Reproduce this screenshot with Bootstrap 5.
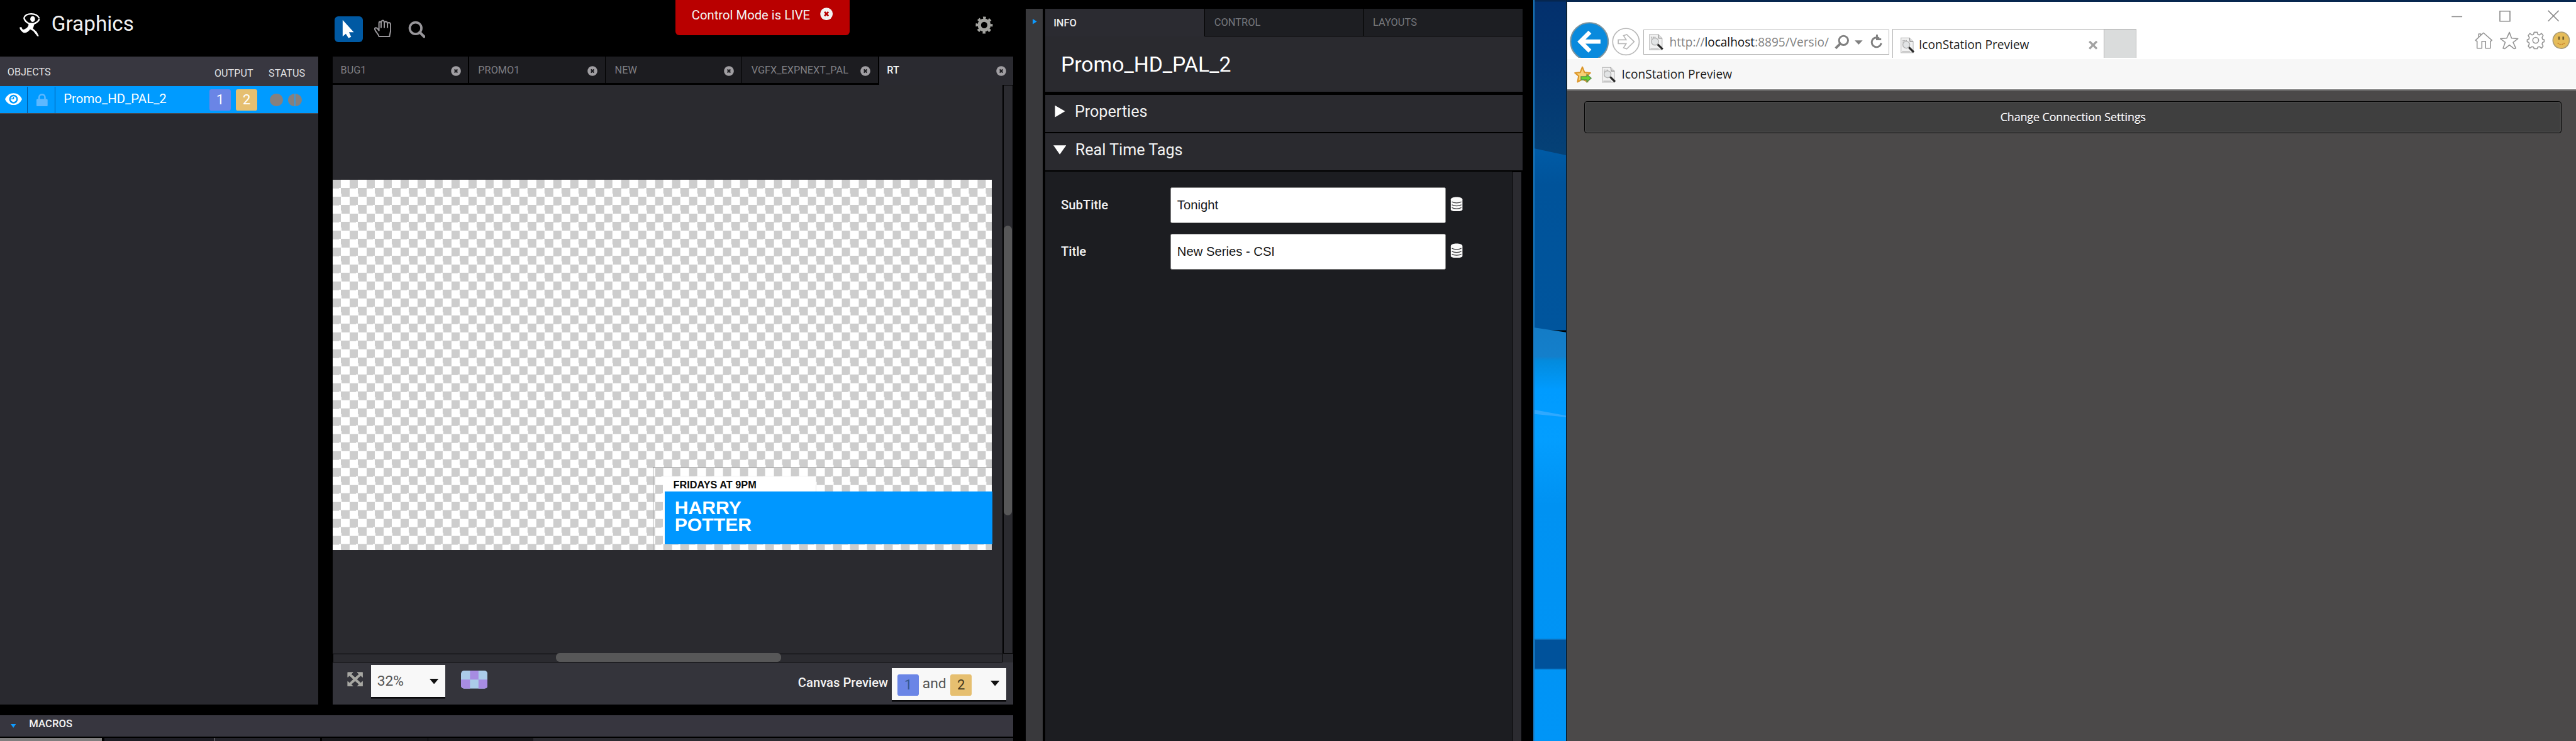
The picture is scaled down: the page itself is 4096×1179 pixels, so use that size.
<!DOCTYPE html>
<html lang="en">
<head>
<meta charset="utf-8">
<title>Graphics</title>
<link rel="stylesheet" href="https://cdn.jsdelivr.net/npm/bootstrap@5.3.0/dist/css/bootstrap.min.css">
<style>
html,body{height:100%;overflow:hidden;background:#000}
.stage{zoom:.8435;width:4856px;height:1398px;font-family:Roboto,"Liberation Sans",sans-serif;line-height:1;color:#f2f2f2;overflow:hidden}
svg{display:block;flex:none}
.no-shrink>*{flex:none}
/* graphics editor */
.editor{width:1934px}
.topbar{height:107px}
.logo{margin:25px 0 0 36px}
.brandname{font-size:39.5px;margin:25px 0 0 19px;width:534px}
.tool-on{width:53px;height:48px;margin-top:31px;background:#0059a3;border-radius:7px}
.hand{margin:37px 0 0 21px}
.lens{margin:39px 0 0 31px}
.live{width:329px;height:66px;margin-left:471px;background:#b90000;border-radius:0 0 7px 7px;padding:0 32px 9px 31px;font-size:24px;white-space:nowrap}
.gear{margin:31px 0 0 237px}
.objects{width:600px;background:#29292f;height:1222px}
.obj-head{height:56px;background:#383740;font-size:19.2px;padding:3px 25px 0 14px;color:#e2e2e4}
.obj-row{height:52px;background:#009bff;border-bottom:2px solid #4a4a50;color:#fff;font-size:24.2px}
.cell{width:52px;height:50px;border-right:2px solid #03579f}
.objname{width:291px;padding:0 0 3px 16px}
.chip{width:40px;height:40px;border-radius:4px;font-size:26px}
.c1{background:#6a85e6}
.c2{background:#e6bf70}
.dot{width:24px;height:24px;border-radius:50%;background:#85807f}
.work{width:1283px;margin-left:27px;height:1222px;background:#2a2a2f}
.tabs{height:53px;background:#000;font-size:19.3px;color:#7f7f84}
.tabx{width:255.5px;height:50px;margin-right:2px;background:#1c1c20;padding:3px 14px 0 17px}
.tabx.on{background:#2a2a30;color:#f4f4f4;height:53px;width:253px;margin:0;padding:0 13px 0 15px;font-weight:500}
.scene{width:1263px;height:1073px;padding-top:179px}
.checker{width:1243px;height:698px;background:repeating-conic-gradient(#fff 0 25%,#cdcdcd 0 50%) 0 0/32px 32px;padding:542px 0 0 604px}
.bounds{width:639px;height:156px;border:2px solid #a4a4a4;border-width:2px 0 0 2px;padding:17px 0 0 17px;font-family:"Liberation Sans",sans-serif;font-weight:700}
.sub{width:289px;height:28px;background:#fff;color:#0c0c0c;font-size:19.3px;padding:6px 0 0 20px;white-space:nowrap}
.main-t{width:622px;height:100px;background:#0097ff;border-left:4px solid #fff;font-size:35.8px;line-height:32.5px;padding:14px 0 0 19px;color:#fff}
.vbar{width:20px;height:1073px;border:2px solid #000;border-width:2px 2px 2px 3px;background:#2b2b30;padding-top:264px}
.vthumb{width:15px;height:547px;border-radius:8px;background:#575758}
.hbar{width:1263px;height:16px;border:2px solid #000;background:#2b2b30}
.hthumb{height:16px;width:424px;margin:-2px 0 0 420px;border-radius:7px;background:#575758}
.bottombar{height:80px;background:#34343b;padding:0 13px 0 27px}
.pick{height:61px;background:#f8f8f8;color:#555;box-shadow:0 3px 0 #08080a;font-size:27px}
.pick1{width:139px;margin:5px 0 0 16px;padding:2px 12px 0 11px}
.pick2{width:216px;margin:11px 0 0 7px;padding:4px 13px 0 11px}
.macros{height:40px;margin-top:20px;width:1910px;background:#37363f;font-size:19.8px;font-weight:500;padding:0 0 6px 20px}
.slots{margin-top:3px;height:6px;width:1910px}
/* inspector */
.sidebar-strip{width:32px;margin-top:17px;background:#39393c;padding:19px 0 0 13px}
.inspector{width:900px;margin:17px 0 0 4px}
.itabs{height:52px;font-size:19.5px;color:#77787c}
.itab{height:50px;background:#1d1e22;padding:3px 0 0 17px;margin-right:2px}
.itab.on{height:52px;width:300px;background:#2b2b31;color:#ececec;font-weight:500;padding:2px 0 0 16px}
.title-box{height:104px;background:#2a2a2f;font-size:40px;padding:1px 0 0 30px;color:#fff;margin-bottom:6px;white-space:nowrap}
.fold{height:70px;background:#2a2a2f;margin-bottom:2.5px;font-size:29.8px;padding:0 0 8px 16px}
.fold svg{margin-right:17px}
.form-area{background:#1c1d21;width:880px;height:1074px;padding:29px 0 0 30px}
.field{height:67.5px;margin-bottom:20.5px;font-size:24px;font-weight:500}
.field label{width:206px}
.field .inp{width:520px;height:67.5px;background:#fff;border:2px solid #8b8b8b;border-radius:3px;color:#161616;font:24px "Liberation Sans",sans-serif;padding:0 12px;margin-right:8px}
.itrack{width:18px;border:2px solid #000;border-width:2px 0 0 2px;background:#2b2b30}
/* desktop and browser */
.desk{width:65px;margin-left:20px;border:solid #1b7cc3;border-width:0 2px 0 3px;border-right-color:#256aa4}
.ie{width:1901px;font-family:"Open Sans","Noto Sans",sans-serif;color:#1c1c1c;background:#4b4949}
.chrome{height:111px;border-top:4px solid #06264f;background:#fff}
.addr{width:463px;height:48px;margin:52px 0 0 6px;border:2px solid #b3b3b3;padding:0 11px 0 8px;font-size:22.6px;color:#828282;white-space:nowrap}
.addr b{font-weight:400;color:#111}
.ietab{width:399px;height:54px;margin:51px 0 0 7px;border:2px solid #b3b3b3;border-bottom:0;padding:6px 11px 0 12px;font-size:22.7px;white-space:nowrap}
.newtab{width:60px;height:54px;margin-top:51px;background:#dadcdc;border:solid #b3b3b3;border-width:2px 2px 0 0}
.winctl{margin-left:auto;width:240px;padding-top:16px}
.fav{height:60px;background:#f7f7f7;border-bottom:3px solid #808080;box-shadow:inset 0 -2px #fff;font-size:22.7px;padding:2px 0 0 13px}
.connect{width:1842px;height:60px;margin:20px 0 0 32px;background:#3f3f3f;border:2px solid #050505;box-shadow:inset 0 0 0 2px #484848;border-radius:5px;color:#fff;font-size:21px;text-shadow:0 1px 0 #000,0 0 1px #fff}
</style>
<script src="https://cdn.jsdelivr.net/npm/bootstrap@5.3.0/dist/js/bootstrap.bundle.min.js"></script>
</head>
<body>
<svg width="0" height="0" class="position-absolute">
<symbol id="x" viewBox="0 0 20 20"><circle cx="10" cy="10" r="9.8" fill="currentColor"/><path d="M7 6.8l6 6.4M13 6.8l-6 6.4" stroke="var(--k,#1c1c20)" stroke-width="2.8"/></symbol>
<symbol id="db" viewBox="0 0 24 28"><path fill="#fafafa" d="M1 5c0-6 22-6 22 0v19c0 5-22 5-22 0z"/><path fill="none" stroke="#3a3a3c" stroke-width="1.500" d="M3 9.500c4 3 14 3 18 0M3 15c4 3 14 3 18 0M3 20.500c4 3 14 3 18 0"/></symbol>
<symbol id="page" viewBox="0 0 28 30"><path d="M2 1h16l7 7v21H2z" fill="#f1f1f1" stroke="#c2c2c2" stroke-width="1.5"/><path d="M18 1l1 7h6" fill="#ddd" stroke="#8a8a8a" stroke-width="1.3"/><path d="M5 6h9M5 9h7" stroke="#aaa" stroke-width="1.6" stroke-dasharray="2 1"/><circle cx="12" cy="14" r="6.5" fill="#e2e4e5" stroke="#b4b4b4" stroke-width="1.7"/><path d="M17 19l9 9" stroke="#292929" stroke-width="3.8"/><path d="M4 27h15" stroke="#c5c5c5" stroke-width="2"/></symbol>
</svg>
<div class="stage d-flex no-shrink">

<div class="editor d-flex flex-column no-shrink">
  <header class="topbar d-flex align-items-start no-shrink">
    <svg class="logo" width="42" height="44" viewBox="0 0 42 44" fill="none" stroke="#fff" stroke-linecap="round"><path d="M10 8C14-1 33-1 38 9" stroke-width="2.600"/><ellipse cx="26" cy="11" rx="4.500" ry="5.500" fill="#fff" stroke="none"/><path d="M10 10c1 4 4 7 10 10l8 0c5-2 9-5 10-8" stroke-width="3"/><path d="M20 19l9 1-3 9 7 6 4 8-2 0-8-10-6-3c-3 5-9 8-13 6-4-3-6-6-6-9l3 0c1 5 4 5 7 3 5-2 7-7 7-11z" fill="#fff" stroke="#fff"/></svg>
    <div class="brandname">Graphics</div>
    <div class="tool-on d-flex justify-content-center align-items-center"><svg width="24" height="36" viewBox="0 0 24 36"><path d="M1 1v31l6-5 5 8 5-2-4-9h9z" fill="#fff"/></svg></div>
    <svg class="hand" width="33" height="34" viewBox="0 0 33 34" fill="none" stroke="#98969a" stroke-width="2.4" stroke-linejoin="round"><path d="M9 32c-1-5-7-9-8-14 0-3 3-3 5-1l3 4V7c0-4 4-4 4 0 0-7 6-7 6 0 1-5 6-4 6 1 1-3 6-3 6 2v10c0 5-2 7-2 12z"/><path d="M13 6v10M19 6v10M25 8v8"/></svg>
    <svg class="lens" width="33" height="33" viewBox="0 0 33 33" fill="none" stroke="#98969a"><circle cx="14" cy="14" r="11" stroke-width="4.4"/><path d="M22 22l8 8" stroke-width="5" stroke-linecap="round"/></svg>
    <div class="live d-flex align-items-center justify-content-between"><span>Control Mode is LIVE</span><svg width="24" height="24" class="mb-1" style="--k:#b90000"><use href="#x"/></svg></div>
    <svg class="gear" width="33" height="33" viewBox="-17 -17 34 34"><g fill="none" stroke="#a3a39f"><circle r="9.5" stroke-width="6.5"/><circle r="14" stroke-width="5" stroke-dasharray="5.5 5.5" stroke-dashoffset="2.7"/></g></svg>
  </header>
  <div class="d-flex no-shrink">
    <section class="objects">
      <div class="obj-head d-flex align-items-center"><span class="me-auto">OBJECTS</span><span class="pt-1">OUTPUT</span><span class="pt-1" style="margin-left:29px">STATUS</span></div>
      <div class="obj-row d-flex align-items-center no-shrink">
        <div class="cell d-flex justify-content-center align-items-center pb-1"><svg width="32" height="23" viewBox="0 0 32 23"><path d="M0 11.5C7-3.500 25-3.500 32 11.500 25 26.500 7 26.500 0 11.500z" fill="#fff"/><circle cx="16" cy="11.500" r="6.800" fill="none" stroke="#009bff" stroke-width="3"/><path d="M16 7v4h-4" fill="none" stroke="#009bff" stroke-width="2"/></svg></div>
        <div class="cell d-flex justify-content-center align-items-center"><svg width="21" height="24" viewBox="0 0 21 24" class="ms-1"><rect y="10" width="21" height="14" rx="2" fill="#5db8ff"/><path d="M5 11V7c0-7 11-7 11 0v4" fill="none" stroke="#5db8ff" stroke-width="3"/></svg></div>
        <div class="objname">Promo_HD_PAL_2</div>
        <div class="chip c1 d-flex justify-content-center align-items-center">1</div>
        <div class="chip c2 d-flex justify-content-center align-items-center" style="margin-left:10px">2</div>
        <div class="dot" style="margin-left:24px"></div>
        <svg width="26" height="24" style="margin-left:10px"><ellipse cx="13" cy="12" rx="13" ry="12" fill="#85807f"/><path d="M13 0v24" stroke="#2f9be8" stroke-width="2"/></svg>
      </div>
    </section>
    <section class="work">
      <nav class="tabs d-flex align-items-start no-shrink">
        <div class="tabx d-flex align-items-center justify-content-between" style="padding-left:15px">BUG1<svg width="19" height="19" color="#a09ea2"><use href="#x"/></svg></div>
        <div class="tabx d-flex align-items-center justify-content-between">PROMO1<svg width="19" height="19" color="#a09ea2"><use href="#x"/></svg></div>
        <div class="tabx d-flex align-items-center justify-content-between">NEW<svg width="19" height="19" color="#a09ea2"><use href="#x"/></svg></div>
        <div class="tabx d-flex align-items-center justify-content-between">VGFX_EXPNEXT_PAL<svg width="19" height="19" color="#a09ea2"><use href="#x"/></svg></div>
        <div class="tabx on d-flex align-items-center justify-content-between">RT<svg width="19" height="19" color="#a09ea2"><use href="#x"/></svg></div>
      </nav>
      <div class="d-flex no-shrink">
        <div class="scene">
          <div class="checker"><div class="bounds">
            <div class="sub">FRIDAYS AT 9PM</div>
            <div class="main-t">HARRY<br>POTTER</div>
          </div></div>
        </div>
        <div class="vbar"><div class="vthumb"></div></div>
      </div>
      <div class="hbar"><div class="hthumb"></div></div>
      <div class="bottombar d-flex align-items-start no-shrink">
        <svg width="30" height="28" viewBox="0 0 30 28" style="margin-top:18px" fill="#a8a8a3" stroke="#a8a8a3"><path d="M1 1h10L7.500 4.500 15 11l7.500-6.500L19 1h10v9l-3.500-3L18 14l7.500 7 3.500-3v9H19l3.500-3.500L15 17l-7.500 6.500L11 27H1v-9l3.500 3 7.500-7-7.500-7L1 10z"/></svg>
        <div class="pick pick1 d-flex align-items-center justify-content-between">32%<svg width="17" height="10"><path d="M0 0h17l-8.500 10z" fill="#111"/></svg></div>
        <svg width="50" height="34" viewBox="0 0 50 34" style="margin:16px 0 0 30px"><clipPath id="cp"><rect width="50" height="34" rx="6"/></clipPath><g clip-path="url(#cp)"><path fill="#abcce9" d="M0 0h50v34H0z"/><path fill="#a78ce2" d="M17 0h16v17H17zM0 17h17v17H0zM33 17h17v17H33z"/></g></svg>
        <div class="ms-auto" style="font-size:24px;font-weight:500;padding-top:27px">Canvas Preview</div>
        <div class="pick pick2 d-flex align-items-center no-shrink"><div class="chip c1 d-flex justify-content-center align-items-center" style="color:#33588f">1</div><span style="margin:0 8px 4px 7px">and</span><div class="chip c2 d-flex justify-content-center align-items-center" style="color:#473a20">2</div><svg width="17" height="10" class="ms-auto" style="margin-bottom:6px"><path d="M0 0h17l-8.500 10z" fill="#111"/></svg></div>
      </div>
    </section>
  </div>
  <div class="macros d-flex align-items-center"><svg width="10" height="7" style="margin:7px 25px 0 0"><path d="M0 0h10L5 7z" fill="#0e9bff"/></svg>MACROS</div>
  <div class="slots d-flex no-shrink"><i style="width:192px;background:#7f7e7e"></i><i style="width:206px;margin-left:5px;background:#1d1d24"></i><i style="width:3px;background:#55555a"></i><i style="width:198px;background:#24242b"></i><i style="width:199px;margin-left:3px;background:#18181c"></i><i style="width:197px;margin-left:2px;background:#18181c"></i><i style="width:905px;background:#2b2b31"></i></div>
</div>

<div class="sidebar-strip"><svg width="8" height="10"><path d="M0 0v10l8-5z" fill="#0e9bff"/></svg></div>
<aside class="inspector">
  <nav class="itabs d-flex no-shrink"><div class="itab on d-flex align-items-center">INFO</div><div class="itab d-flex align-items-center" style="width:298px">CONTROL</div><div class="itab d-flex align-items-center me-0" style="width:298px;padding-left:16px">LAYOUTS</div></nav>
  <div class="title-box d-flex align-items-center">Promo_HD_PAL_2</div>
  <div class="fold d-flex align-items-center"><svg width="23" height="24"><path d="M3 1l19 11L3 23z" fill="#fff"/></svg>Properties</div>
  <div class="fold d-flex align-items-center"><svg width="24" height="24"><path d="M0 4h24L12 21z" fill="#fff"/></svg>Real Time Tags</div>
  <div class="d-flex no-shrink">
    <div class="form-area">
      <div class="field d-flex align-items-center"><label>SubTitle</label><div class="inp d-flex align-items-center">Tonight</div><svg width="24" height="28" class="mb-1"><use href="#db"/></svg></div>
      <div class="field d-flex align-items-center"><label>Title</label><div class="inp d-flex align-items-center">New Series - CSI</div><svg width="24" height="28" class="mb-1"><use href="#db"/></svg></div>
    </div>
    <div class="itrack"></div>
  </div>
</aside>

<div class="desk"><svg width="60" height="1398" viewBox="0 0 60 1398" preserveAspectRatio="none">
  <defs><linearGradient id="a" x2="0" y2="1"><stop stop-color="#03306d"/><stop offset=".35" stop-color="#03346f"/><stop offset="1" stop-color="#054277"/></linearGradient>
  <linearGradient id="b" x2="0" y2="1"><stop stop-color="#005ba6"/><stop offset=".2" stop-color="#00539a"/><stop offset="1" stop-color="#00559d"/></linearGradient>
  <linearGradient id="c" x2="0" y2="1"><stop stop-color="#147cc6"/><stop offset=".07" stop-color="#147fcb"/><stop offset=".08" stop-color="#038bdd"/><stop offset=".15" stop-color="#009bff"/><stop offset=".27" stop-color="#039eff"/><stop offset=".43" stop-color="#0092f2"/><stop offset="1" stop-color="#0095f7"/></linearGradient></defs>
  <path fill="url(#a)" d="M0 0h60v300H0z"/><path fill="url(#b)" d="M0 280l60 13v330H0z"/><path fill="url(#c)" d="M0 618l60 9v771H0z"/><path fill="#2fa9ff" d="M0 773l60 11v3L0 781z"/><path fill="#00529b" stroke="#0b70bd" stroke-width="2" d="M0 1206h60v56H0z"/><path fill="#06264f" d="M0 0h60v3H0z"/></svg></div>

<main class="ie">
  <div class="chrome d-flex align-items-start no-shrink">
    <svg width="74" height="67" viewBox="0 0 74 67" style="margin:38px 0 0 4px"><circle cx="37" cy="37" r="35.500" fill="#098add" stroke="#7d949e" stroke-width="2.500"/><path d="M58 37H22M38 19L20 37l18 18" fill="none" stroke="#fff" stroke-width="8"/></svg>
    <svg width="53" height="53" viewBox="0 0 53 53" style="margin:49px 0 0 6px" fill="none" stroke="#b9b9b9" stroke-width="2"><circle cx="26.500" cy="26.500" r="25"/><path d="M12 23h15l-5-8 6-2 14 13.500L28 40l-6-2 5-8H12z"/></svg>
    <div class="addr d-flex align-items-center"><svg width="29" height="31" class="me-2"><use href="#page"/></svg><span style="padding-left:3px">http://<b>localhost</b>:8895/Versio/</span>
      <svg class="ms-auto" width="90" height="28" viewBox="0 0 90 28" fill="none" stroke="#808080"><circle cx="17" cy="11" r="8.500" stroke-width="3.500"/><path d="M11 17l-9 9" stroke-width="4.500"/><path d="M38 11h15l-7.500 8z" fill="#808080" stroke="none"/><path d="M84 7a9 9 0 1 0 4 9M80 0v9h8" stroke-width="3.500"/></svg></div>
    <div class="ietab d-flex align-items-center"><svg width="28" height="31" class="me-2"><use href="#page"/></svg>IconStation Preview<svg class="ms-auto" width="17" height="16"><path d="M1.500 1l14 14M15.500 1l-14 14" stroke="#a2a2a2" stroke-width="4"/></svg></div>
    <div class="newtab"></div>
    <div class="winctl">
      <svg width="240" height="80" viewBox="0 0 240 80" fill="none" stroke="#8b8b8b" stroke-width="1.900"><path d="M5 12.500h20M96 2h19v19H96zM187 1l20 20M207 1l-20 20"/>
      <g stroke="#959595" stroke-linejoin="round"><path d="M50 57l15-14 16 14-3 2v13h-9V59h-7v13h-9V59zM56 51v-6h4v2"/><path d="M114 42l4 11 12 1-9 7 5 11-3 1-9-7-9 7-3-1 4-11-9-7 12-1z"/><circle cx="163.500" cy="57" r="5.500"/><path d="M160.500 42h6l1 4 3 1 4-3 3 4-2 4 1 3 3 1v4l-3 1-1 3 2 4-3 4-4-3-3 1-1 3h-6l-1-3-3-1-4 3-3-4 2-4-1-3-3-1v-4l3-1 1-3-2-4 3-4 4 3 3-1z"/></g>
      <circle cx="211.500" cy="57" r="15.500" fill="#e5bc59" stroke="#a99b78"/><path d="M207.500 50v6M215.500 50v6" stroke="#74602f" stroke-width="3.200"/><path d="M205 62c3 4 10 4 13 0" stroke="#c47a28" stroke-dasharray="2.500 1.500"/></svg>
    </div>
  </div>
  <div class="fav d-flex align-items-center no-shrink"><svg width="33" height="32" viewBox="0 0 33 32"><path d="M15.500 2l4 10 11 1-8 7 3 10-10-5-9 5 2-11-7-6 10-1z" fill="#f8cf74" stroke="#dc962a" stroke-width="2.500" stroke-linejoin="round"/><path d="M13 20h11v-4l8 7-8 7v-4H13z" fill="#68d530" stroke="#5a914b" stroke-width="1.700"/></svg><svg width="28" height="31" style="margin:0 11px 0 17px"><use href="#page"/></svg>IconStation Preview</div>
  <div class="connect d-flex justify-content-center align-items-center">Change Connection Settings</div>
</main>
</div>
</body>
</html>
